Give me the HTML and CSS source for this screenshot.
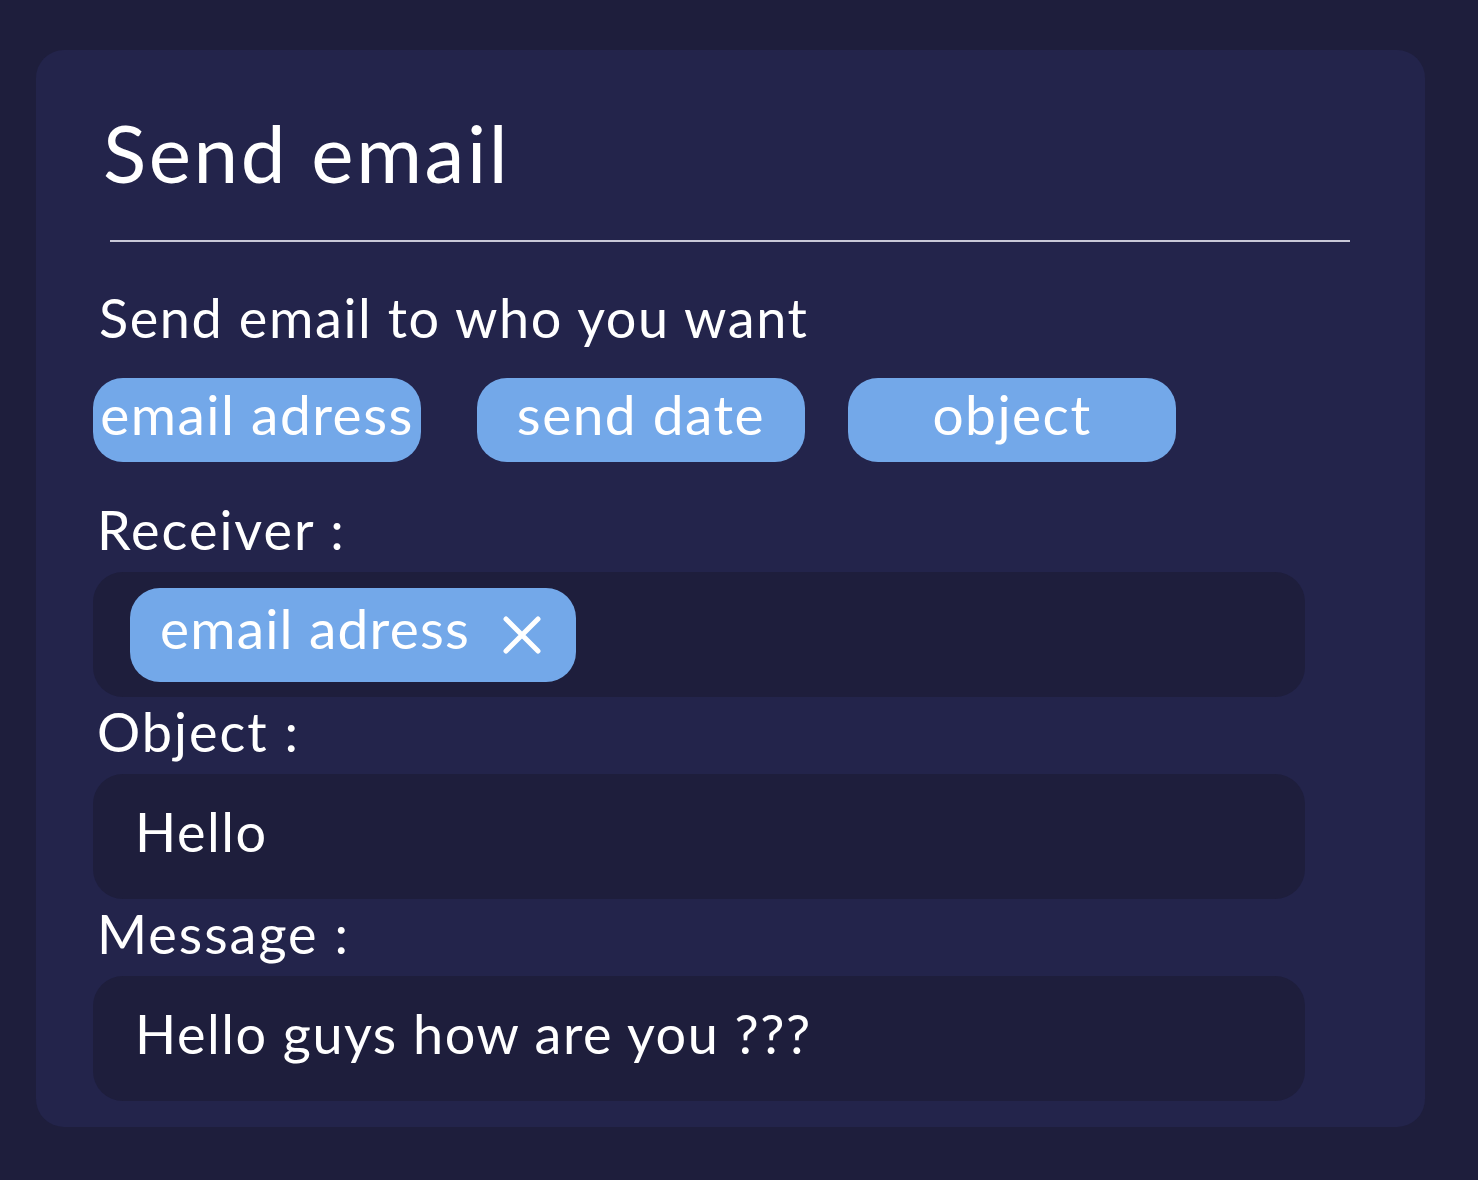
FILE: index.html
```html
<!DOCTYPE html>
<html lang="en">
<head>
<meta charset="utf-8">
<title>Send email</title>
<link rel="stylesheet" href="styles.css">
</head>
<body>
<main class="card">
  <h1 class="title">Send email</h1>
  <hr class="divider">
  <p class="subtitle">Send email to who you want</p>
  <div class="chips">
    <span class="chip">email adress</span>
    <span class="chip chip-mid">send date</span>
    <span class="chip">object</span>
  </div>
  <label class="label label-first">Receiver :</label>
  <div class="field field-tags">
    <span class="tag"><span class="tag-text">email adress</span>
      <svg class="tag-x" viewBox="0 0 40 40" width="40" height="40" aria-hidden="true">
        <path d="M4 4 L36 36 M36 4 L4 36" stroke="#fff" stroke-width="5" stroke-linecap="round" fill="none"/>
      </svg>
    </span>
  </div>
  <label class="label">Object :</label>
  <div class="field">Hello</div>
  <label class="label">Message :</label>
  <div class="field">Hello guys how are you ???</div>
</main>
</body>
</html>
```
FILE: styles.css
```css
html, body {
  margin: 0;
  padding: 0;
  background: #1e1e3c;
}
body {
  font-family: Lato, "Open Sans", sans-serif;
  color: #ffffff;
  padding: 50px 53px 53px 36px;
}
.card {
  box-sizing: border-box;
  width: 1389px;
  height: 1077px;
  background: #23244b;
  border-radius: 28px;
  padding: 0 0 0 57px;
  display: flex;
  flex-direction: column;
}
.title {
  margin: 62px 0 0 10px;
  font-size: 80px;
  font-weight: 400;
  line-height: 1;
  letter-spacing: 2.6px;
}
.divider {
  margin: 48px 0 0 17px;
  width: 1240px;
  border: 0;
  height: 2px;
  background: #c9c9d8;
}
.subtitle {
  margin: 49px 0 0 6px;
  font-size: 54px;
  line-height: 1;
  letter-spacing: 1.6px;
}
.chips {
  display: flex;
  gap: 43px;
  margin-top: 33px;
}
.chip {
  box-sizing: border-box;
  width: 328px;
  height: 84px;
  padding-bottom: 12px;
  border-radius: 30px;
  background: #73a8e9;
  display: flex;
  align-items: center;
  justify-content: center;
  font-size: 55px;
  letter-spacing: 1.5px;
  white-space: nowrap;
}
.chip-mid {
  margin-left: 13px;
}
.label {
  display: block;
  margin: 8px 0 0 4px;
  font-size: 54px;
  line-height: 1;
  letter-spacing: 2px;
}
.label-first {
  margin-top: 41px;
}
.field {
  box-sizing: border-box;
  width: 1212px;
  height: 125px;
  margin-top: 15px;
  border-radius: 30px;
  background: #1e1e3c;
  display: flex;
  align-items: center;
  padding-left: 42px;
  padding-bottom: 10px;
  font-size: 54px;
  letter-spacing: 1.5px;
}
.field-tags {
  padding-left: 37px;
  padding-bottom: 0;
}
.tag {
  height: 94px;
  border-radius: 30px;
  background: #73a8e9;
  display: flex;
  align-items: center;
  gap: 32px;
  padding: 0 34px 0 30px;
  font-size: 55px;
  letter-spacing: 1.2px;
}
.tag-text {
  padding-bottom: 14px;
}
.tag-x {
  display: block;
}
```
